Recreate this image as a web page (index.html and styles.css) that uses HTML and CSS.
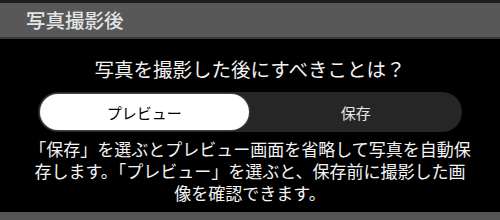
FILE: index.html
```html
<!DOCTYPE html>
<html lang="ja">
<head>
<meta charset="utf-8">
<link rel="stylesheet" href="styles.css">
</head>
<body>
<div class="screen">
  <header class="header"><h1 class="title">写真撮影後</h1></header>
  <main class="content">
    <p class="question">写真を撮影した後にすべきことは？</p>
    <div class="segmented">
      <div class="segment selected">プレビュー</div>
      <div class="segment">保存</div>
    </div>
    <p class="desc">「保存」を選ぶとプレビュー画面を省略して写真を自動保<br>存します。「プレビュー」を選ぶと、保存前に撮影した画<br>像を確認できます。</p>
  </main>
  <footer class="footer"></footer>
</div>
</body>
</html>
```
FILE: styles.css
```css
* { box-sizing: border-box; }
html, body { margin: 0; padding: 0; background: #000; }
body {
  font-family: "Noto Sans CJK JP", "Noto Sans", sans-serif;
  width: 500px;
  height: 220px;
  overflow: hidden;
}
.screen { display: flex; flex-direction: column; height: 220px; }
.header {
  border-top: 3px solid #1d1d1d;
  border-bottom: 2px solid #393939;
  background: #585858;
  height: 39px;
  display: flex;
  align-items: center;
  padding-left: 26px;
}
.title {
  margin: 0;
  font-size: 19.5px;
  font-weight: 500;
  color: #e4e4e4;
  line-height: 1;
}
.content {
  flex: 1;
  display: flex;
  flex-direction: column;
  align-items: center;
}
.question {
  margin: 17px 0 0;
  font-size: 19.5px;
  line-height: 26px;
  color: #f2f2f2;
  height: 26px;
}
.segmented {
  margin-top: 10px;
  width: 424px;
  height: 40px;
  background: #262626;
  border-radius: 20px;
  padding: 2px;
  display: grid;
  grid-template-columns: 1fr 1fr;
  gap: 3px;
}
.segment {
  border-radius: 18px;
  display: flex;
  align-items: center;
  justify-content: center;
  font-size: 15px;
  color: #e6e6e6;
}
.segment.selected {
  background: #fff;
  color: #000;
  box-shadow: 0 0 1px 1px rgba(90,90,90,0.6);
}
.desc {
  margin: 6px 0 0;
  font-size: 17px;
  line-height: 22px;
  color: #f4f4f4;
  text-align: center;
  white-space: nowrap;
}
.footer {
  height: 8px;
  background: #555;
}
```
